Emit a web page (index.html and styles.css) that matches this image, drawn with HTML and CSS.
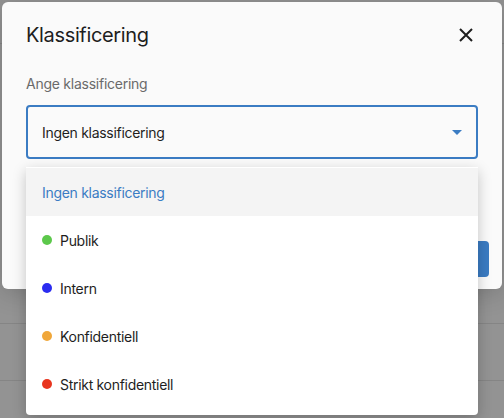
FILE: index.html
```html
<!DOCTYPE html>
<html lang="sv">
<head>
<meta charset="utf-8">
<title>Klassificering</title>
<link rel="stylesheet" href="styles.css">
</head>
<body>
<div class="page">
  <div class="page-row page-row--top"></div>
  <div class="page-row page-row--a"></div>
  <div class="page-row page-row--b"></div>
</div>
<div class="modal" role="dialog" aria-labelledby="modal-title">
  <div class="modal-header">
    <h2 class="modal-title" id="modal-title">Klassificering</h2>
    <button class="close-btn" aria-label="Stäng">
      <svg width="14" height="14" viewBox="0 0 14 14"><path d="M1 1L13 13M13 1L1 13" stroke="#1e1e1e" stroke-width="2" fill="none"/></svg>
    </button>
  </div>
  <div class="modal-body">
    <div class="field-label">Ange klassificering</div>
    <div class="select-wrap">
      <div class="select">
        <span class="select-value">Ingen klassificering</span>
        <svg class="select-arrow" width="10" height="5" viewBox="0 0 10 5"><path d="M0 0H10L5 5Z" fill="#3b7cc3"/></svg>
      </div>
      <ul class="menu">
        <li class="menu-item menu-item--active">Ingen klassificering</li>
        <li class="menu-item"><span class="dot dot--green"></span>Publik</li>
        <li class="menu-item"><span class="dot dot--blue"></span>Intern</li>
        <li class="menu-item"><span class="dot dot--orange"></span>Konfidentiell</li>
        <li class="menu-item"><span class="dot dot--red"></span>Strikt konfidentiell</li>
      </ul>
    </div>
  </div>
  <div class="modal-footer">
    <button class="primary-btn">Spara</button>
  </div>
</div>
</body>
</html>
```
FILE: styles.css
```css
* { box-sizing: border-box; }
html, body { margin: 0; padding: 0; }
body {
  width: 504px;
  height: 418px;
  overflow: hidden;
  background: #939393;
  font-family: Inter, "Noto Sans", sans-serif;
  position: relative;
}
.page { height: 418px; }
.page-row { border-bottom: 1px solid #858585; }
.page-row--top { height: 44px; }
.page-row--a { height: 280px; }
.page-row--b { height: 57px; }

.modal {
  position: absolute;
  top: 2px;
  left: 2px;
  width: 500px;
  height: 287px;
  background: #fafafa;
  border-radius: 6px;
  box-shadow: 0 4px 24px rgba(0,0,0,0.18);
  display: flex;
  flex-direction: column;
}
.modal-header {
  display: flex;
  align-items: center;
  justify-content: space-between;
  padding: 21px 24px 0 24px;
}
.modal-title {
  margin: 0;
  font-size: 20px;
  line-height: 24px;
  font-weight: 400;
  letter-spacing: -0.35px;
  color: #1e1e1e;
}
.close-btn {
  border: 0;
  background: none;
  padding: 0;
  margin-right: 5px;
  width: 14px;
  height: 14px;
  display: flex;
}
.modal-body { padding: 27px 24px 0 24px; }
.field-label {
  font-size: 14px;
  line-height: 20px;
  color: #6a6a6a;
  letter-spacing: -0.25px;
  margin-bottom: 11px;
}
.select-wrap { position: relative; }
.select {
  height: 54px;
  border: 2px solid #3b7cc3;
  border-radius: 4px;
  display: flex;
  align-items: center;
  justify-content: space-between;
  padding: 0 14px 0 14px;
}
.select-value { font-size: 14px; color: #1e1e1e; letter-spacing: -0.3px; }
.menu {
  position: absolute;
  top: calc(100% + 8px);
  left: 0;
  right: 0;
  margin: 0;
  padding: 1px 0 7px 0;
  list-style: none;
  background: #fff;
  border-radius: 0 0 4px 4px;
  box-shadow: 0 4px 14px rgba(0,0,0,0.22);
  z-index: 2;
}
.menu-item {
  height: 48px;
  display: flex;
  align-items: center;
  gap: 8px;
  padding: 0 16px;
  font-size: 14px;
  letter-spacing: -0.3px;
  color: #1e1e1e;
}
.menu-item--active { background: #f4f4f4; color: #3b7cc3; }
.dot { width: 10px; height: 10px; border-radius: 50%; display: inline-block; }
.dot--green { background: #5cc84b; }
.dot--blue { background: #2b2cf0; }
.dot--orange { background: #f0a73a; }
.dot--red { background: #e8351f; }

.modal-footer {
  margin-top: auto;
  display: flex;
  justify-content: flex-end;
  padding: 0 13px 12px 13px;
}
.primary-btn {
  height: 36px;
  width: 90px;
  border: 0;
  border-radius: 4px;
  background: #3a7bc2;
  color: #fff;
  font-family: inherit;
  font-size: 14px;
}
```
